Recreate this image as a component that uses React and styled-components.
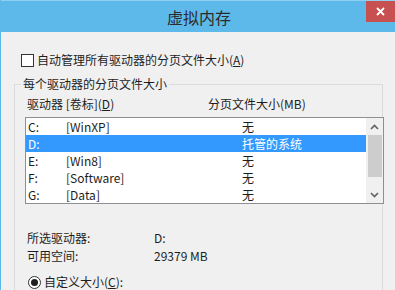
import React from 'react';
import styled, { createGlobalStyle } from 'styled-components';

const GlobalStyle = createGlobalStyle`
  html, body {
    margin: 0;
    padding: 0;
    background: #f0f0f0;
  }
  body {
    font-family: "Noto Sans CJK SC", "Noto Sans", sans-serif;
    font-size: 12px;
    color: #1e1e1e;
  }
`;

const Window = styled.div`
  width: 395px;
  height: 290px;
  box-sizing: border-box;
  border-left: 1px solid #5cb8e8;
  background: #f0f0f0;
  overflow: hidden;
`;

const TitleBar = styled.div`
  height: 32px;
  background: #5db9e9;
  border-top: 1px solid #8fd0f2;
  box-sizing: border-box;
  display: grid;
  grid-template-columns: 1fr auto 1fr;
  align-items: center;
`;

const Title = styled.div`
  grid-column: 2;
  font-size: 16px;
  color: #2b2b2b;
  padding-left: 2px;
  margin-top: 1px;
`;

const CloseButton = styled.div`
  grid-column: 3;
  justify-self: end;
  align-self: start;
  width: 29px;
  height: 21px;
  background: #c75050;
  display: flex;
  align-items: center;
  justify-content: center;
`;

const Body = styled.div`
  padding: 20px 0 0 20px;
`;

const OptionRow = styled.label`
  display: flex;
  align-items: center;
  gap: 3px;
  height: 16px;
  line-height: 16px;
`;

const CheckBox = styled.span`
  width: 11px;
  height: 11px;
  border: 1px solid #333;
  background: #fff;
`;

const Radio = styled.span`
  width: 11px;
  height: 11px;
  border: 1px solid #333;
  border-radius: 50%;
  background: #fff;
  display: flex;
  align-items: center;
  justify-content: center;

  &::after {
    content: '';
    width: 7px;
    height: 7px;
    border-radius: 50%;
    background: #1e1e1e;
  }
`;

const Key = styled.span`
  text-decoration: underline;
`;

const GroupBox = styled.fieldset`
  margin: 8px 0 0 -7px;
  width: 369px;
  height: 240px;
  box-sizing: border-box;
  border: 1px solid #dcdcdc;
  padding: 0 0 0 10px;
  min-inline-size: 0;
`;

const Legend = styled.legend`
  padding: 0 2px;
  margin-left: -4px;
  line-height: 16px;
`;

const ColumnHeader = styled.div`
  display: grid;
  grid-template-columns: 181px 1fr;
  padding-left: 2px;
  margin-top: 4px;
  line-height: 16px;
`;

const ListBox = styled.div`
  margin-top: 5px;
  width: 359px;
  height: 87px;
  box-sizing: border-box;
  border: 1px solid #8e8f94;
  background: #fff;
  display: flex;
`;

const Rows = styled.div`
  flex: 1;
`;

const Row = styled.div`
  display: grid;
  grid-template-columns: 38px 176px 1fr;
  height: 17px;
  line-height: 17px;
  padding-left: 2px;
  background: ${p => (p.$selected ? '#3399ff' : 'transparent')};
  color: ${p => (p.$selected ? '#fff' : '#1e1e1e')};
`;

const ScrollBar = styled.div`
  width: 17px;
  background: #f0f0f0;
  display: flex;
  flex-direction: column;
`;

const ArrowButton = styled.div`
  height: 17px;
  display: flex;
  align-items: center;
  justify-content: center;
`;

const Track = styled.div`
  flex: 1;
  padding: 0 1px 0 2px;
`;

const Thumb = styled.div`
  height: 42px;
  background: #cdcdcd;
`;

const InfoGrid = styled.div`
  margin-top: 25px;
  display: grid;
  grid-template-columns: 127px 1fr;
  line-height: 18px;
  padding-left: 2px;
`;

const RadioRow = styled(OptionRow)`
  margin-top: 9px;
  margin-left: 3px;
`;

const Chevron = ({ up }) => (
  <svg width="9" height="6" viewBox="0 0 9 6">
    <polyline
      points={up ? '1,5 4.5,1.5 8,5' : '1,1 4.5,4.5 8,1'}
      fill="none"
      stroke="#606060"
      strokeWidth="1.6"
    />
  </svg>
);

const drives = [
  { id: 'C:', label: '[WinXP]', size: '无' },
  { id: 'D:', label: '', size: '托管的系统', selected: true },
  { id: 'E:', label: '[Win8]', size: '无' },
  { id: 'F:', label: '[Software]', size: '无' },
  { id: 'G:', label: '[Data]', size: '无' },
];

const App = () => (
  <>
    <GlobalStyle />
    <Window>
      <TitleBar>
        <Title>虚拟内存</Title>
        <CloseButton>
          <svg width="9" height="9" viewBox="0 0 9 9">
            <path d="M1 1 L8 8 M8 1 L1 8" stroke="#fff" strokeWidth="1.8" />
          </svg>
        </CloseButton>
      </TitleBar>
      <Body>
        <OptionRow>
          <CheckBox />
          <span>自动管理所有驱动器的分页文件大小(<Key>A</Key>)</span>
        </OptionRow>
        <GroupBox>
          <Legend>每个驱动器的分页文件大小</Legend>
          <ColumnHeader>
            <span>驱动器 [卷标](<Key>D</Key>)</span>
            <span>分页文件大小(MB)</span>
          </ColumnHeader>
          <ListBox>
            <Rows>
              {drives.map(d => (
                <Row key={d.id} $selected={d.selected}>
                  <span>{d.id}</span>
                  <span>{d.label}</span>
                  <span>{d.size}</span>
                </Row>
              ))}
            </Rows>
            <ScrollBar>
              <ArrowButton><Chevron up /></ArrowButton>
              <Track><Thumb /></Track>
              <ArrowButton><Chevron /></ArrowButton>
            </ScrollBar>
          </ListBox>
          <InfoGrid>
            <span>所选驱动器:</span>
            <span>D:</span>
            <span>可用空间:</span>
            <span>29379 MB</span>
          </InfoGrid>
          <RadioRow>
            <Radio />
            <span>自定义大小(<Key>C</Key>):</span>
          </RadioRow>
        </GroupBox>
      </Body>
    </Window>
  </>
);

export default App;
